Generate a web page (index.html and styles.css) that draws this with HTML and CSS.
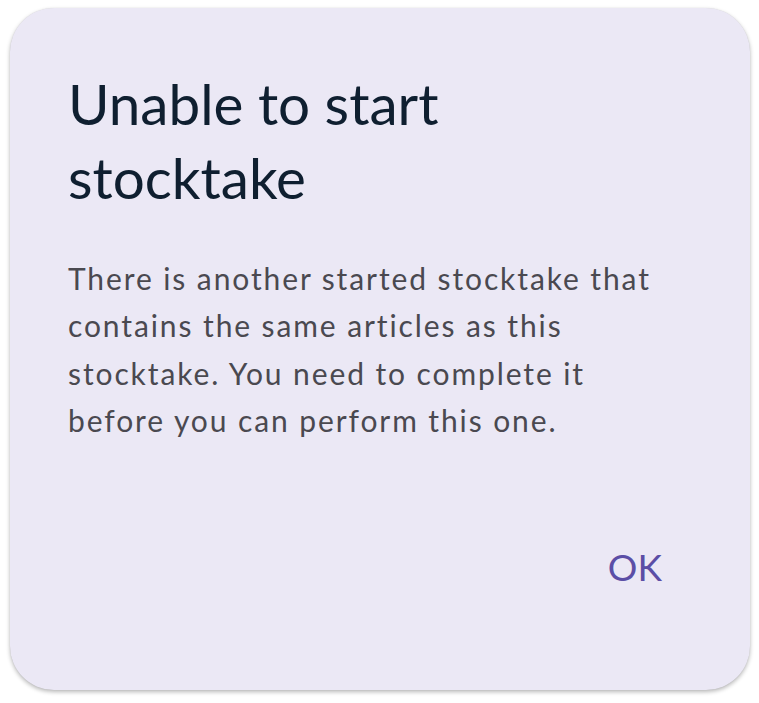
FILE: index.html
```html
<!DOCTYPE html>
<html lang="en">
<head>
<meta charset="utf-8">
<title>Unable to start stocktake</title>
<link rel="stylesheet" href="styles.css">
</head>
<body>
  <div class="dialog" role="dialog" aria-labelledby="dlg-title">
    <h1 class="dialog-title" id="dlg-title">Unable to start stocktake</h1>
    <p class="dialog-text">There is another started stocktake that contains the same articles as this stocktake. You need to complete it before you can perform this one.</p>
    <div class="dialog-actions">
      <button class="dialog-btn" type="button">OK</button>
    </div>
  </div>
</body>
</html>
```
FILE: styles.css
```css
html, body {
  margin: 0;
  background: #ffffff;
}
body {
  padding: 8px 9px 13px 10px;
  font-family: Lato, "Open Sans", sans-serif;
}
.dialog {
  box-sizing: border-box;
  width: 740px;
  height: 682px;
  background: #ebe8f5;
  border-radius: 44px;
  box-shadow: 0 2px 4px rgba(0, 0, 0, 0.28), 0 0 1px rgba(0, 0, 0, 0.12);
  padding: 58px 58px 0 58px;
  display: flex;
  flex-direction: column;
}
.dialog-title {
  margin: 0;
  font-size: 56.6px;
  line-height: 74px;
  font-weight: 400;
  color: #0f1f30;
  width: 420px;
}
.dialog-text {
  margin: 41px 0 0 0;
  font-size: 30px;
  line-height: 47.3px;
  letter-spacing: 1.9px;
  color: #4a4950;
  max-width: 610px;
}
.dialog-actions {
  display: flex;
  justify-content: flex-end;
  margin-top: 101px;
  padding-right: 30px;
}
.dialog-btn {
  font-family: Lato, "Open Sans", sans-serif;
  font-size: 37px;
  line-height: 44px;
  color: #5b4ea6;
  background: transparent;
  border: none;
  padding: 0;
  cursor: pointer;
}
```
